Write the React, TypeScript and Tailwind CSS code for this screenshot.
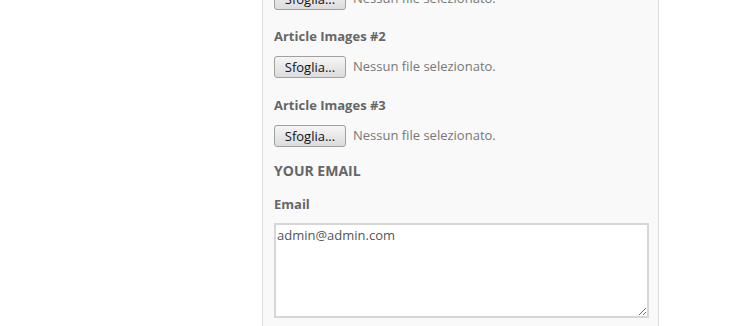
const font = { fontFamily: '"Open Sans", "Noto Sans", sans-serif' };

function FileRow({ className = "" }: { className?: string }) {
  return (
    <div className={`flex items-center ${className}`}>
      <button
        type="button"
        className="h-[22px] w-[72px] rounded-[3px] border border-[#a0a0a0] bg-gradient-to-b from-[#f5f5f5] to-[#dcdcdc] text-[13px] leading-none text-[#111]"
      >
        Sfoglia...
      </button>
      <span className="ml-[7px] text-[13px] text-[#777]">Nessun file selezionato.</span>
    </div>
  );
}

function Label({ children, className = "" }: { children: React.ReactNode; className?: string }) {
  return <div className={`text-[13px] font-bold leading-[18px] text-[#666] ${className}`}>{children}</div>;
}

export default function App() {
  return (
    <div className="flex h-[326px] w-[729px] overflow-hidden bg-white" style={font}>
      <div className="ml-[262px] h-full w-[397px] border-x border-[#dcdcdc] bg-[#f9f9f9] pl-[11px]">
        <FileRow className="mt-[-12px]" />
        <Label className="mt-[17px]">Article Images #2</Label>
        <FileRow className="mt-[11px]" />
        <Label className="mt-[18px]">Article Images #3</Label>
        <FileRow className="mt-[11px]" />
        <div className="mt-[14px] text-[14px] font-bold leading-[20px] text-[#666]">YOUR EMAIL</div>
        <Label className="mt-[14px]">Email</Label>
        <textarea
          defaultValue="admin@admin.com"
          className="mt-[10px] block h-[95px] w-[375px] border-2 border-[#d6d6d6] bg-white px-[1px] py-[1px] text-[13px] leading-[18px] text-[#555] outline-none"
          style={font}
        />
      </div>
    </div>
  );
}
